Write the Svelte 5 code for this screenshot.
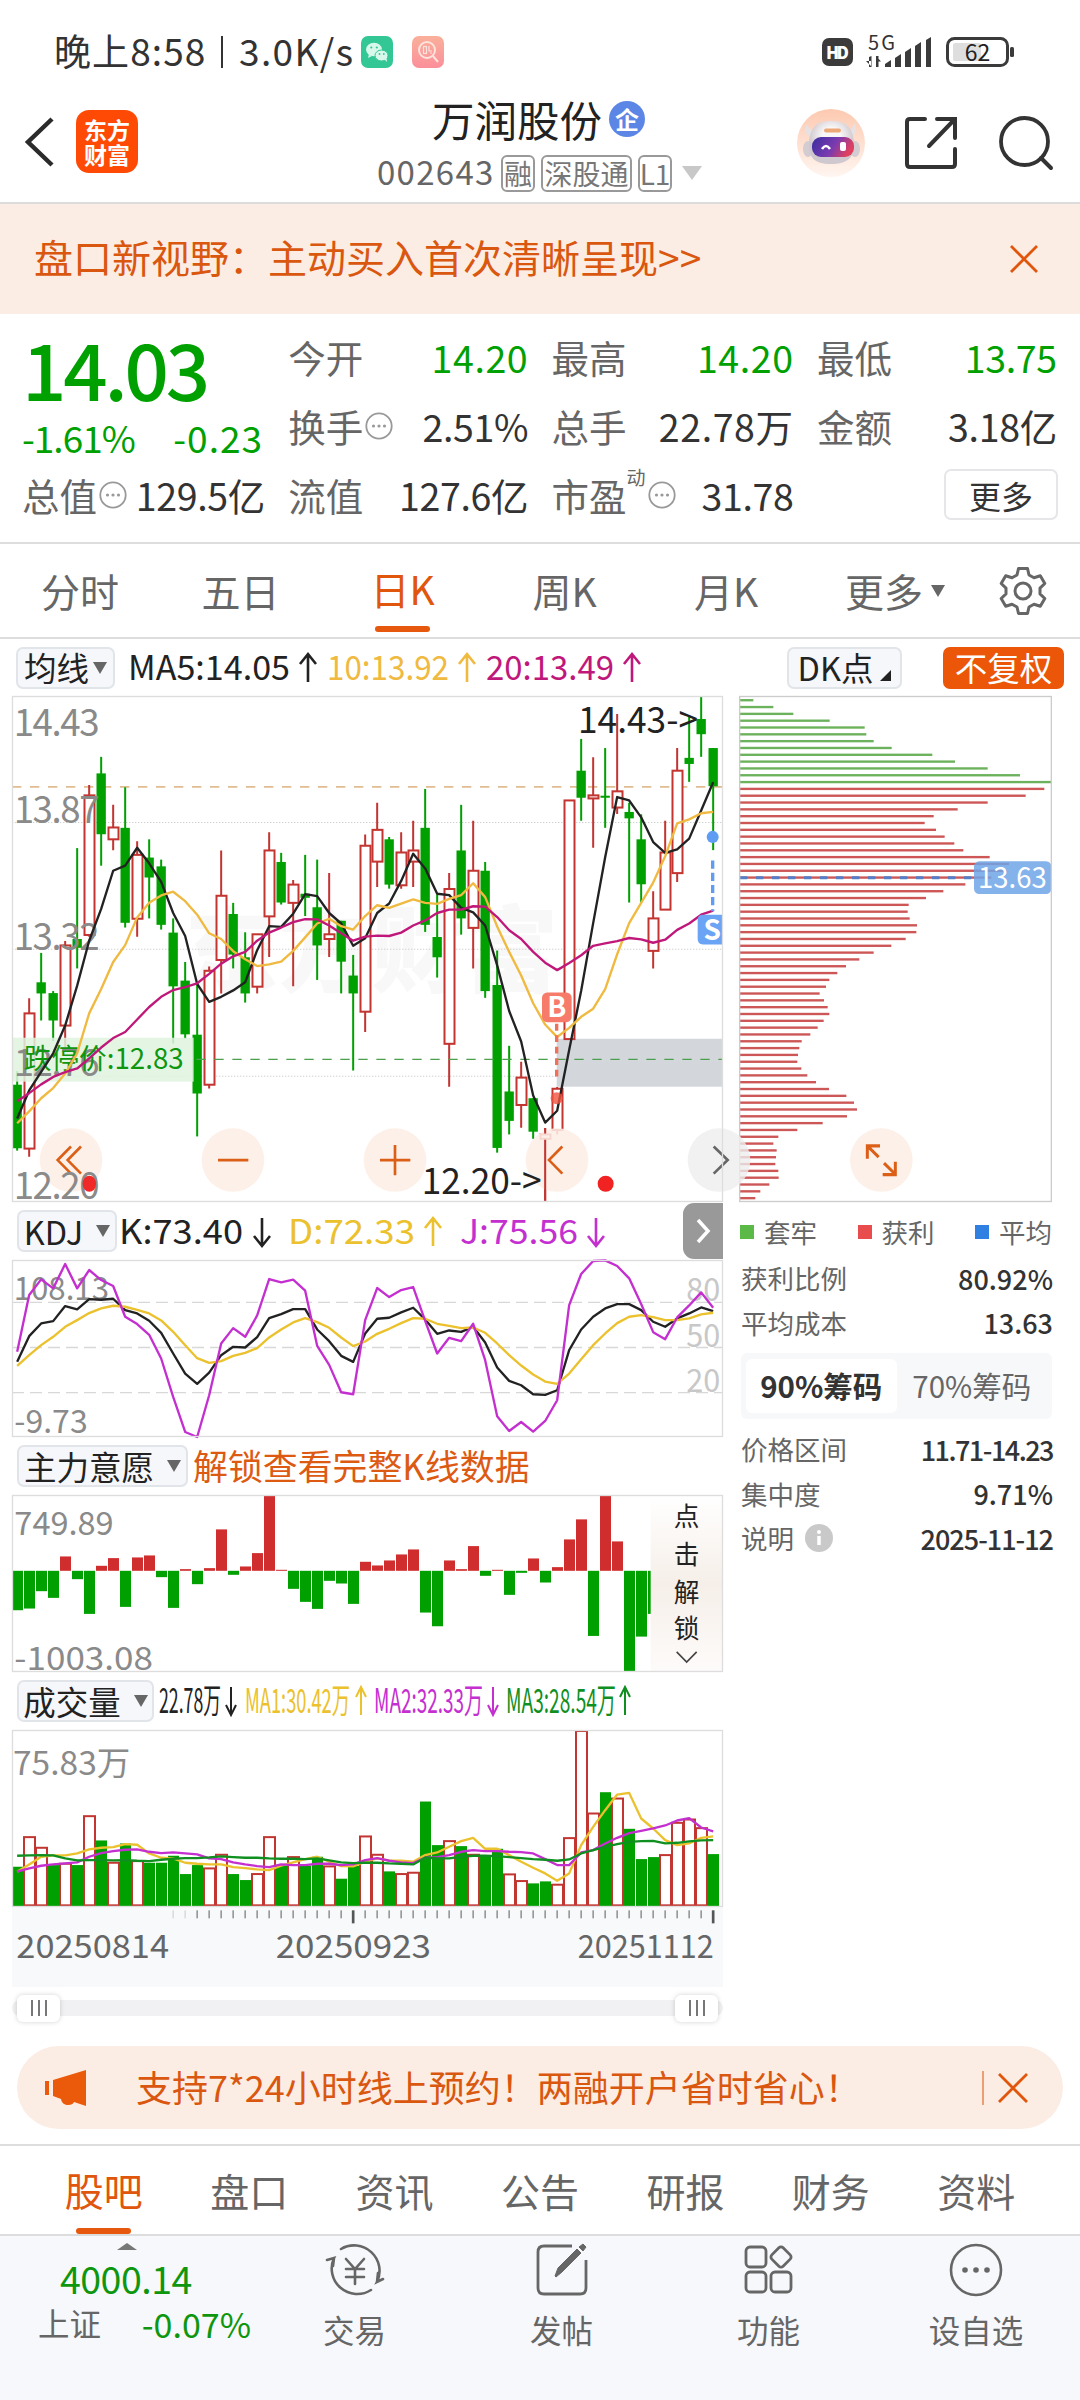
<script>
  const GREEN = '#00a000';
  const RED = '#c23531';

  // [high, top, bottom, low, up]
  const candles = [
    [1143, 1183, 1371, 1378, 0], [927, 972, 1372, 1396, 1], [793, 880, 913, 993, 0], [906, 912, 993, 1054, 0],
    [758, 771, 1008, 1080, 1], [483, 752, 778, 839, 0], [296, 327, 740, 745, 1], [213, 262, 442, 535, 0],
    [355, 422, 457, 489, 1], [303, 423, 704, 718, 0], [463, 503, 692, 745, 1], [457, 511, 570, 691, 0],
    [517, 537, 710, 724, 0], [691, 733, 892, 1061, 0], [820, 875, 1034, 1047, 0], [880, 1035, 1209, 1336, 0],
    [833, 846, 1183, 1194, 1], [490, 624, 814, 913, 1], [645, 678, 798, 839, 0], [732, 806, 913, 940, 0],
    [738, 738, 893, 913, 1], [436, 490, 685, 805, 1], [497, 524, 644, 650, 0], [577, 591, 645, 892, 1],
    [503, 618, 630, 684, 0], [517, 658, 771, 873, 0], [557, 738, 752, 805, 1], [698, 698, 819, 913, 0],
    [799, 860, 913, 1141, 0], [443, 476, 967, 1027, 1], [349, 429, 523, 598, 1], [450, 457, 591, 603, 0],
    [436, 496, 593, 603, 1], [402, 490, 523, 598, 1], [308, 423, 710, 731, 0], [620, 746, 806, 866, 0],
    [557, 604, 1062, 1189, 1], [355, 490, 691, 739, 0], [402, 550, 719, 839, 1], [524, 550, 906, 926, 0],
    [786, 888, 1370, 1384, 0], [1068, 1203, 1290, 1330, 0], [1115, 1162, 1243, 1310, 1], [1223, 1223, 1322, 1343, 0],
    [1311, 1330, 1343, 1530, 1], [1190, 1195, 1317, 1330, 1], [342, 342, 1048, 1048, 1], [160, 254, 334, 402, 0],
    [214, 327, 336, 482, 1], [187, 328, 334, 423, 0], [86, 315, 363, 382, 1], [349, 376, 395, 644, 0],
    [383, 457, 590, 644, 0], [611, 691, 787, 839, 1], [402, 496, 665, 665, 1], [187, 254, 557, 583, 1],
    [93, 216, 234, 287, 0], [33, 101, 146, 213, 0], [187, 187, 300, 489, 0]
  ];

  const ma5 = [1283, 1200, 1145, 1090, 1008, 890, 757, 663, 550, 535, 482, 528, 583, 675, 743, 885, 938, 923, 904, 880, 785, 714, 716, 677, 619, 625, 675, 706, 772, 750, 675, 647, 580, 500, 543, 618, 622, 660, 673, 712, 830, 965, 1055, 1215, 1295, 1260, 1080, 905, 705, 510, 332, 342, 392, 465, 497, 487, 455, 372, 288];
  const ma10 = [1297, 1262, 1223, 1193, 1150, 1090, 972, 900, 820, 770, 688, 645, 623, 612, 640, 680, 735, 752, 788, 812, 832, 827, 819, 787, 747, 706, 692, 714, 724, 684, 652, 660, 647, 635, 645, 648, 633, 622, 587, 628, 715, 790, 860, 942, 1005, 1042, 1015, 982, 958, 900, 797, 705, 645, 585, 507, 410, 398, 380, 376];
  const ma20 = [1232, 1208, 1182, 1160, 1146, 1135, 1105, 1073, 1045, 1027, 990, 953, 923, 903, 894, 883, 855, 825, 803, 790, 757, 733, 718, 702, 693, 694, 712, 735, 757, 745, 742, 743, 733, 712, 697, 675, 665, 665, 655, 656, 687, 726, 752, 790, 822, 844, 823, 800, 772, 765, 758, 749, 753, 763, 754, 725, 706, 680, 668];

  const kLine = [485, 408, 370, 363, 318, 328, 297, 299, 296, 330, 340, 362, 398, 460, 520, 551, 517, 465, 440, 442, 411, 354, 342, 327, 327, 388, 423, 467, 485, 400, 356, 353, 337, 323, 358, 401, 391, 395, 380, 427, 502, 542, 555, 582, 584, 570, 450, 388, 350, 325, 312, 312, 330, 365, 380, 355, 340, 322, 333];
  const dLine = [497, 465, 435, 410, 380, 360, 339, 325, 317, 320, 329, 340, 361, 395, 435, 474, 488, 483, 467, 458, 444, 412, 388, 367, 354, 366, 383, 412, 438, 424, 401, 386, 369, 354, 356, 371, 377, 384, 382, 398, 430, 465, 496, 523, 544, 551, 520, 477, 435, 400, 369, 350, 345, 351, 360, 360, 355, 343, 338];
  const jLine = [455, 285, 238, 265, 192, 265, 210, 240, 258, 350, 372, 404, 475, 590, 695, 710, 585, 430, 384, 410, 346, 237, 247, 239, 272, 437, 494, 576, 582, 360, 264, 291, 270, 261, 362, 460, 413, 423, 371, 480, 648, 692, 665, 694, 662, 600, 315, 222, 183, 181, 198, 235, 312, 396, 417, 352, 316, 277, 323];

  // above the zero line (407) is inflow, below is outflow
  const force = [525, 520, 468, 488, 364, 432, 536, 392, 369, 515, 367, 361, 426, 518, 402, 447, 399, 283, 419, 394, 354, 181, 404, 461, 500, 521, 437, 445, 506, 380, 391, 376, 358, 343, 532, 573, 376, 402, 333, 422, 404, 479, 413, 370, 442, 396, 313, 253, 602, 183, 319, 710, 604, 536];

  const volume = [
    [575, 0], [486, 1], [518, 1], [570, 0], [566, 1], [570, 0], [423, 1], [496, 0], [563, 1], [505, 0],
    [558, 1], [563, 0], [563, 0], [542, 0], [597, 0], [570, 0], [580, 1], [539, 1], [597, 0], [615, 0],
    [597, 1], [486, 1], [572, 0], [546, 1], [572, 0], [545, 0], [574, 1], [611, 0], [572, 0], [484, 1],
    [539, 1], [589, 0], [597, 1], [593, 1], [379, 0], [510, 0], [498, 1], [513, 0], [539, 1], [541, 0],
    [521, 0], [598, 1], [618, 1], [625, 0], [619, 0], [629, 1], [489, 1], [167, 1], [415, 1], [351, 0],
    [370, 1], [461, 0], [552, 0], [546, 0], [540, 1], [443, 1], [433, 1], [459, 1], [537, 0]
  ];
  const vol1 = [590, 568, 545, 541, 541, 535, 523, 518, 516, 507, 509, 535, 548, 550, 563, 566, 568, 568, 576, 579, 583, 585, 572, 562, 552, 545, 560, 573, 574, 560, 550, 556, 557, 560, 540, 532, 515, 498, 488, 521, 521, 540, 560, 578, 595, 617, 595, 510, 455, 405, 358, 353, 430, 460, 495, 510, 505, 488, 484];
  const vol2 = [590, 580, 572, 568, 565, 562, 545, 534, 528, 524, 523, 530, 534, 532, 535, 538, 550, 552, 562, 568, 573, 576, 568, 570, 570, 566, 566, 570, 568, 555, 549, 557, 562, 564, 548, 546, 540, 530, 525, 528, 528, 530, 531, 535, 552, 570, 570, 532, 525, 505, 488, 474, 467, 460, 451, 436, 429, 457, 469];
  const vol3 = [542, 541, 540, 541, 550, 556, 555, 555, 556, 555, 557, 558, 554, 551, 549, 549, 547, 544, 546, 548, 548, 550, 551, 551, 552, 550, 556, 562, 564, 563, 563, 565, 566, 568, 548, 550, 550, 545, 542, 542, 543, 546, 549, 552, 554, 557, 553, 535, 525, 515, 507, 500, 498, 497, 505, 503, 499, 496, 495];

  const chips = [
    86, 146, 206, 315, 420, 425, 447, 501, 623, 691, 789, 886, 980, 959, 903, 789, 699, 627, 600, 634, 660, 689,
    716, 795, 853, 846, 800, 722, 656, 604, 552, 549, 555, 577, 575, 543, 500, 447, 404, 364, 338, 314, 304, 285,
    298, 309, 314, 297, 279, 257, 231, 224, 220, 218, 230, 248, 274, 313, 365, 388, 397, 367, 294, 218, 161, 146,
    156, 154, 152, 161, 162, 134, 107, 92
  ];

  const maLegend = [
    { x: 128, w: 162, text: 'MA5:14.05', color: '#222', up: true, ax: 308 },
    { x: 327, w: 122, text: '10:13.92', color: '#f0b940', up: true, ax: 467 },
    { x: 486, w: 128, text: '20:13.49', color: '#c0187a', up: true, ax: 632 }
  ];
  const kdjLegend = [
    { x: 119, w: 124, text: 'K:73.40', color: '#222', up: false, ax: 262 },
    { x: 288, w: 127, text: 'D:72.33', color: '#ebc12d', up: true, ax: 433 },
    { x: 460, w: 118, text: 'J:75.56', color: '#c42fd0', up: false, ax: 596 }
  ];
  const volLegend = [
    { x: 159, w: 62, text: '22.78万', color: '#222', up: false, ax: 231, thin: true },
    { x: 245, w: 105, text: 'MA1:30.42万', color: '#ebc12d', up: true, ax: 361, thin: true },
    { x: 374, w: 109, text: 'MA2:32.33万', color: '#c42fd0', up: false, ax: 493, thin: true },
    { x: 506, w: 110, text: 'MA3:28.54万', color: '#0f8f1f', up: true, ax: 625, thin: true }
  ];

  const periods = ['分时', '五日', '日K', '周K', '月K'];
  let period = $state('日K');

  const sections = ['股吧', '盘口', '资讯', '公告', '研报', '财务', '资料'];
  let section = $state('股吧');

  const prices = [[150, '14.43'], [408, '13.87'], [784, '13.32'], [1157, '12.76']];
  const ticks = Array.from({ length: 46 }, (_, n) => n + 13);

  const cx = (i) => 52.5 + i * 36;
  const line = (values) => values.map((y, i) => `${cx(i)},${y}`).join(' ');
</script>

{#snippet legend(items, y)}
  <svg class="legend" width="711" height="58" viewBox="12 0 711 58">
    {#each items as item}
      <text x={item.x} y={y + 12} font-size="34" fill={item.color} textLength={item.w} lengthAdjust="spacingAndGlyphs">{item.text}</text>
      <path
        d={item.up
          ? `M${item.ax} ${y + 14}V${y - 14}M${item.ax - (item.thin ? 5 : 8)} ${y - 4}L${item.ax} ${y - 14}L${item.ax + (item.thin ? 5 : 8)} ${y - 4}`
          : `M${item.ax} ${y - 14}V${y + 14}M${item.ax - (item.thin ? 5 : 8)} ${y + 4}L${item.ax} ${y + 14}L${item.ax + (item.thin ? 5 : 8)} ${y + 4}`}
        fill="none" stroke={item.color} stroke-width={item.thin ? 2 : 2.6} />
    {/each}
  </svg>
{/snippet}

{#snippet dots()}
  <svg class="dots" width="28" height="28" viewBox="0 0 28 28">
    <circle cx="14" cy="14" r="12.7" fill="none" stroke="#999" stroke-width="1.8" />
    <circle cx="8.5" cy="14" r="1.6" fill="#999" /><circle cx="14" cy="14" r="1.6" fill="#999" /><circle cx="19.5" cy="14" r="1.6" fill="#999" />
  </svg>
{/snippet}

<main class="app">
  <div class="status">
    <span class="clock">晚上8:58</span><span class="bar"></span><span class="clock speed">3.0K/s</span>
    <svg class="chat" width="32" height="32" viewBox="0 0 32 32">
      <rect width="32" height="32" rx="7" fill="#34c796" />
      <ellipse cx="13" cy="13.5" rx="8" ry="6.8" fill="#d9f8ec" /><path d="M8 18l-1 4 4-2z" fill="#d9f8ec" />
      <ellipse cx="20.5" cy="19.5" rx="6.5" ry="5.5" fill="#d9f8ec" stroke="#34c796" stroke-width="1" /><path d="M23 23l3 3-.5-4z" fill="#d9f8ec" />
      <g fill="#34c796"><circle cx="10.3" cy="11.5" r="1.1" /><circle cx="15.8" cy="11.5" r="1.1" /><circle cx="18.5" cy="18" r=".9" /><circle cx="22.8" cy="18" r=".9" /></g>
    </svg>
    <svg class="find" width="32" height="32" viewBox="0 0 32 32">
      <defs><linearGradient id="find" x2="0" y2="1"><stop stop-color="#f9b09a" /><stop offset="1" stop-color="#fb8f9b" /></linearGradient></defs>
      <rect width="32" height="32" rx="7" fill="url(#find)" />
      <circle cx="15" cy="14" r="8" fill="none" stroke="#fde3dc" stroke-width="2" /><path d="M21 20l5 6" stroke="#fde3dc" stroke-width="2" />
      <rect x="11.5" y="10.5" width="3" height="7" fill="none" stroke="#fde3dc" stroke-width="1.2" /><path d="M17 10v5h3M18 17h2" stroke="#fde3dc" stroke-width="1.2" fill="none" />
    </svg>
    <svg class="signal" width="200" height="40" viewBox="815 32 200 40">
      <rect x="822" y="38" width="31" height="28" rx="7" fill="#3b3b3b" />
      <text x="837.5" y="59" font-size="17" font-weight="900" fill="#fff" text-anchor="middle" textLength="23">HD</text>
      <text x="868" y="50" font-size="20" fill="#333" textLength="27">5G</text>
      <g fill="#3b3b3b">
        <path d="M869 57v10h2.500V56zM866 61h5v5zM876 67V56h2.500v11zM876 56l5 5.500h-5z" />
        <path d="M885 67v-3l6-4v7zM895 67V58l6-4v13zM905 67V52l6-4v19zM915 67V46l6-4v25zM926 67V40l5-3v30z" />
        <rect x="1010" y="47" width="4" height="10" rx="1.500" />
      </g>
      <rect x="947.500" y="38.500" width="60" height="27" rx="7" fill="#fff" stroke="#3b3b3b" stroke-width="3" />
      <rect x="953" y="43" width="28" height="18" rx="2" fill="#dedede" />
      <text x="977.500" y="60.500" font-size="23" fill="#222" text-anchor="middle">62</text>
    </svg>
  </div>

  <header class="nav">
    <div class="left">
      <svg width="32" height="52" viewBox="0 0 32 52"><path d="M30 3L6 26l24 23" fill="none" stroke="#2b2b2b" stroke-width="4.500" /></svg>
      <div class="logo"><span>东方</span><span>财富</span></div>
    </div>
    <div class="stock">
      <h1>万润股份<i>企</i></h1>
      <p><span class="code">002643</span><b>融</b><b>深股通</b><b>L1</b><svg width="20" height="14" viewBox="0 0 20 14"><path d="M0 0h20L10 14z" fill="#c8c8c8" /></svg></p>
    </div>
    <div class="tools">
      <svg width="68" height="68" viewBox="0 0 68 68">
        <defs>
          <linearGradient id="halo" x2="0" y2="1"><stop stop-color="#fdc9b0" /><stop offset="1" stop-color="#fff6f1" /></linearGradient>
          <linearGradient id="visor" x2="1" y2=".3"><stop stop-color="#3b2f9f" /><stop offset=".6" stop-color="#7a3bb0" /><stop offset="1" stop-color="#e0405f" /></linearGradient>
          <radialGradient id="helmet" cy=".35"><stop offset=".4" stop-color="#f8f6f7" /><stop offset="1" stop-color="#cfc8ce" /></radialGradient>
        </defs>
        <circle cx="34" cy="34" r="34" fill="url(#halo)" />
        <path d="M10 15q-5 9 5 14l5-6q-8-1-10-8zM57 14q6 9-4 15l-5-6q8-1 9-9z" fill="#e6e1e3" />
        <ellipse cx="11" cy="40" rx="5" ry="8" fill="#d3cdd2" /><ellipse cx="58" cy="40" rx="5" ry="8" fill="#d3cdd2" />
        <path d="M34 12c16 0 22 7 23 22 1 14-6 21-23 21S11 48 12 34c1-15 7-22 22-22z" fill="url(#helmet)" />
        <rect x="15" y="28" width="42" height="20" rx="9" fill="url(#visor)" />
        <rect x="27" y="19.500" width="17" height="4" rx="2" fill="#eda878" />
        <path d="M25 40q4-6 8 0" fill="none" stroke="#fff" stroke-width="2.500" /><rect x="43" y="33" width="6" height="9" rx="2" fill="#fff" />
      </svg>
      <svg width="54" height="54" viewBox="0 0 54 54">
        <path d="M21 3H6Q3 3 3 6v42q0 3 3 3h42q3 0 3-3V33M33 3h18v19M51 3L25 30" fill="none" stroke="#333" stroke-width="4" stroke-linecap="round" />
      </svg>
      <svg width="54" height="54" viewBox="0 0 54 54">
        <circle cx="25.500" cy="25.500" r="23.500" fill="none" stroke="#333" stroke-width="3.800" /><path d="M42 42l10 10" stroke="#333" stroke-width="4" stroke-linecap="round" />
      </svg>
    </div>
  </header>

  <div class="notice">
    <span>盘口新视野：主动买入首次清晰呈现&gt;&gt;</span>
    <svg width="30" height="30" viewBox="0 0 30 30"><path d="M2 2l26 26M28 2L2 28" stroke="#e0560c" stroke-width="2.800" /></svg>
  </div>

  <section class="quote">
    <div class="price">
      <strong>14.03</strong>
      <div class="change"><span>-1.61%</span><span>-0.23</span></div>
    </div>
    <div class="cell"><label>今开</label><em class="down wide">14.20</em></div>
    <div class="cell"><label>最高</label><em class="down wide">14.20</em></div>
    <div class="cell"><label>最低</label><em class="down">13.75</em></div>
    <div class="cell"><label>换手{@render dots()}</label><em>2.51%</em></div>
    <div class="cell"><label>总手</label><em class="wide">22.78万</em></div>
    <div class="cell"><label>金额</label><em>3.18亿</em></div>
    <div class="cell"><label>总值{@render dots()}</label><em>129.5亿</em></div>
    <div class="cell"><label>流值</label><em>127.6亿</em></div>
    <div class="cell"><label>市盈<sup>动</sup>{@render dots()}</label><em>31.78</em></div>
    <div class="cell end"><button class="more">更多</button></div>
  </section>

  <nav class="periods">
    {#each periods as name}
      <button class:active={period === name} onclick={() => (period = name)}>{name}</button>
    {/each}
    <button>更多<svg width="14" height="12" viewBox="0 0 14 12"><path d="M0 0h14L7 12z" fill="#666" /></svg></button>
    <button>
      <svg width="50" height="50" viewBox="0 0 50 50">
        <path d="M20.500 2.500h9l1.500 6.500 5 2.800 6.300-2 4.500 7.700-4.800 4.600v5.800l4.800 4.600-4.500 7.700-6.300-2-5 2.800-1.500 6.500h-9L19 41l-5-2.800-6.300 2-4.500-7.700L8 27.900v-5.800l-4.800-4.600 4.500-7.700 6.300 2L19 9z" fill="none" stroke="#666" stroke-width="3" stroke-linejoin="round" />
        <circle cx="25" cy="25" r="8" fill="none" stroke="#666" stroke-width="3" />
      </svg>
    </button>
  </nav>

  <div class="averages">
    <button class="pick tight">均线<svg width="14" height="12" viewBox="0 0 14 12"><path d="M0 0h14L7 12z" fill="#666" /></svg></button>
    {@render legend(maLegend, 29)}
    <button class="pick dk">DK点<svg width="11" height="11" viewBox="0 0 11 11"><path d="M11 0v11H0z" fill="#222" /></svg></button>
    <button class="rights">不复权</button>
  </div>

  <div class="board">
    <div class="charts">
      <svg class="kline" width="711" height="506" viewBox="37 33 2133 1497" preserveAspectRatio="none">
        <text x="555" y="888" font-size="280" font-weight="900" fill="#f8f8f8" textLength="1120">东方财富</text>
        <g stroke="#d0d0d0" stroke-width="3" stroke-dasharray="4 5">
          <path d="M37 407H2170M37 782H2170M37 1158H2170" />
        </g>
        <rect x="1671" y="1047" width="499" height="142" fill="#d3d7dc" />
        <path d="M37 302H2170" stroke="#e0bd90" stroke-width="5" stroke-dasharray="28 26" />
        {#each candles as [high, top, bottom, low, up], i}
          {#if up}
            <path d="M{cx(i)} {high}V{top}M{cx(i)} {bottom}V{low}" stroke={RED} stroke-width="6" />
            <rect x={cx(i) - 14} y={top} width="30" height={Math.max(bottom - top, 4)} fill="#fff" stroke={RED} stroke-width="6" />
          {:else}
            <path d="M{cx(i)} {high}V{low}" stroke={GREEN} stroke-width="6" />
            <rect x={cx(i) - 14} y={top} width="28" height={bottom - top} fill={GREEN} />
          {/if}
        {/each}
        <rect x="37" y="1044" width="545" height="130" fill="#dff3df" fill-opacity=".85" />
        {#each prices as [y, label]}
          <text x="42" {y} font-size="110" fill="#8a8a8a" textLength="258">{label}</text>
        {/each}
        <path d="M590 1108H2170" stroke="#4c9f4c" stroke-width="4" stroke-dasharray="28 26" />
        <text x="72" y="1138" font-size="84" fill="#0f960f" textLength="480" lengthAdjust="spacingAndGlyphs">跌停价:12.83</text>
        <g fill="none" stroke-width="7" stroke-linejoin="round">
          <polyline points={line(ma5)} stroke="#222" />
          <polyline points={line(ma10)} stroke="#f0b940" />
          <polyline points={line(ma20)} stroke="#c0187a" />
        </g>

        <path d="M1671 1003V1160" stroke="#f0705c" stroke-width="10" stroke-dasharray="20 14" />
        <circle cx="1671" cy="1223" r="18" fill="#f0533f" opacity=".8" />
        <rect x="1627" y="910" width="89" height="88" rx="16" fill="#f77b6b" />
        <text x="1671" y="983" font-size="84" font-weight="700" fill="#fff" text-anchor="middle">B</text>
        <path d="M2139 520V670" stroke="#5f9df5" stroke-width="10" stroke-dasharray="24 12" />
        <circle cx="2139" cy="450" r="18" fill="#5f9df5" />
        <path d="M2170 680h-60q-16 0-16 16v56q0 16 16 16h60z" fill="#6ba3f5" />
        <text x="2138" y="754" font-size="84" font-weight="700" fill="#fff" text-anchor="middle">S</text>

        <g fill="#fdeee5" fill-opacity=".88">
          <circle cx="214" cy="1406" r="94" /><circle cx="700" cy="1406" r="94" />
          <circle cx="1186" cy="1406" r="94" /><circle cx="1672" cy="1406" r="94" />
        </g>
        <circle cx="2158" cy="1406" r="94" fill="#eee" fill-opacity=".8" />
        <path d="M{cx(44)} 1346V1530M{cx(44)} 1311v16" stroke={RED} stroke-width="6" />
        <g fill="none" stroke="#dc5f18" stroke-width="8">
          <path d="M214 1366l-40 40 40 40M244 1366l-40 40 40 40M1688 1366l-40 40 40 40" />
          <path d="M655 1406h91M1141 1406h91M1186 1361v90" />
        </g>
        <path d="M2142 1366l42 40-42 40" fill="none" stroke="#666" stroke-width="8" />
        <text x="42" y="1522" font-size="110" fill="#8a8a8a" textLength="258">12.20</text>
        <ellipse cx="269" cy="1476" rx="20" ry="24" fill="#f02828" />
        <circle cx="1818" cy="1476" r="24" fill="#f02222" />
        <text x="1735" y="142" font-size="108" fill="#222" textLength="360" lengthAdjust="spacingAndGlyphs">14.43-&gt;</text>
        <text x="1266" y="1505" font-size="108" fill="#222" textLength="360" lengthAdjust="spacingAndGlyphs">12.20-&gt;</text>
        <rect x="38.500" y="34.500" width="2130" height="1494" fill="none" stroke="#ddd" stroke-width="4" />
      </svg>

      <div class="row">
        <button class="pick w100">KDJ<svg width="14" height="12" viewBox="0 0 14 12"><path d="M0 0h14L7 12z" fill="#666" /></svg></button>
        {@render legend(kdjLegend, 30)}
        <button class="next" aria-label="next"><svg width="16" height="26" viewBox="0 0 16 26"><path d="M3 2l10 11L3 24" fill="none" stroke="#fff" stroke-width="3.500" /></svg></button>
      </div>
      <svg width="711" height="177" viewBox="37 180 2133 530" preserveAspectRatio="none">
        <path d="M37 307H2170M37 442H2170M37 577H2170" stroke="#d8d8d8" stroke-width="4" stroke-dasharray="36 18" />
        <g font-size="94" fill="#c8c8c8">
          <text x="2060" y="304" textLength="102" lengthAdjust="spacingAndGlyphs">80</text>
          <text x="2060" y="440" textLength="102" lengthAdjust="spacingAndGlyphs">50</text>
          <text x="2060" y="574" textLength="102" lengthAdjust="spacingAndGlyphs">20</text>
        </g>
        <g font-size="98" fill="#8a8a8a">
          <text x="42" y="299" textLength="286" lengthAdjust="spacingAndGlyphs">108.13</text>
          <text x="44" y="698" textLength="220" lengthAdjust="spacingAndGlyphs">-9.73</text>
        </g>
        <g fill="none" stroke-width="7" stroke-linejoin="round">
          <polyline points={line(kLine)} stroke="#222" />
          <polyline points={line(dLine)} stroke="#ebc12d" />
          <polyline points={line(jLine)} stroke="#c42fd0" />
        </g>
        <rect x="38.500" y="181.500" width="2130" height="527" fill="none" stroke="#ddd" stroke-width="4" />
      </svg>

      <div class="row">
        <button class="pick w171">主力意愿<svg width="14" height="12" viewBox="0 0 14 12"><path d="M0 0h14L7 12z" fill="#666" /></svg></button>
        <span class="unlock">解锁查看完整K线数据</span>
      </div>
      <svg width="711" height="177" viewBox="37 180 2133 530" preserveAspectRatio="none">
        <defs><linearGradient id="veil" x2="0" y2="1"><stop stop-color="#fff" /><stop offset=".5" stop-color="#f6efe9" /><stop offset="1" stop-color="#fdfbfa" /></linearGradient></defs>
        {#each force as y, i}
          <rect x={37 + i * 36} y={Math.min(y, 407)} width="33" height={Math.abs(y - 407)} fill={y < 407 ? '#d02e2e' : GREEN} />
        {/each}
        <g font-size="98" fill="#8a8a8a">
          <text x="44" y="299" textLength="298" lengthAdjust="spacingAndGlyphs">749.89</text>
          <text x="44" y="705" textLength="416" lengthAdjust="spacingAndGlyphs">-1003.08</text>
        </g>
        <rect x="1953" y="182" width="215" height="526" fill="url(#veil)" />
        <g font-size="77" fill="#222" text-anchor="middle">
          <text x="2061" y="273">点</text><text x="2061" y="386">击</text><text x="2061" y="499">解</text><text x="2061" y="609">锁</text>
        </g>
        <path d="M2031 650l30 30 30-30" fill="none" stroke="#444" stroke-width="5" />
        <rect x="38.500" y="181.500" width="2130" height="527" fill="none" stroke="#ddd" stroke-width="4" />
      </svg>

      <div class="row">
        <button class="pick w137">成交量<svg width="14" height="12" viewBox="0 0 14 12"><path d="M0 0h14L7 12z" fill="#666" /></svg></button>
        {@render legend(volLegend, 29)}
      </div>
      <svg width="711" height="177" viewBox="37 164 2133 532" preserveAspectRatio="none">
        <text x="40" y="300" font-size="98" fill="#8a8a8a" textLength="352" lengthAdjust="spacingAndGlyphs">75.83万</text>
        {#each volume as [y, up], i}
          {#if up}
            <rect x={37 + i * 36} y={y} width="33" height={691 - y} fill="#fff" stroke={RED} stroke-width="6" />
          {:else}
            <rect x={37 + i * 36} y={y} width="33" height={694 - y} fill={GREEN} />
          {/if}
        {/each}
        <g fill="none" stroke-width="7" stroke-linejoin="round">
          <polyline points={line(vol1)} stroke="#ebc12d" />
          <polyline points={line(vol2)} stroke="#c42fd0" />
          <polyline points={line(vol3)} stroke="#0f8f1f" />
        </g>
        <rect x="38.500" y="165.500" width="2130" height="529" fill="none" stroke="#ddd" stroke-width="4" />
      </svg>
      <svg class="axis" width="711" height="80" viewBox="37 696 2133 240">
        {#each ticks as i}
          <path d="M{cx(i)} 706V{i === 28 || i === 58 ? 745 : 730}" stroke={i < 15 ? '#ddd' : i === 28 || i === 58 ? '#555' : '#999'} stroke-width={i === 28 || i === 58 ? 8 : 5} />
        {/each}
        <g font-size="98" fill="#666">
          <text x="50" y="848" textLength="458" lengthAdjust="spacingAndGlyphs">20250814</text>
          <text x="828" y="848" textLength="466" lengthAdjust="spacingAndGlyphs">20250923</text>
          <text x="1734" y="848" textLength="408" lengthAdjust="spacingAndGlyphs">20251112</text>
        </g>
      </svg>
      <div class="slider">
        <span class="handle"><i></i><i></i><i></i></span>
        <span class="handle"><i></i><i></i><i></i></span>
      </div>
    </div>

    <aside class="chips">
      <svg width="313" height="506" viewBox="43 33 939 1497" preserveAspectRatio="none">
        {#each chips as end, i}
          <rect x="46" y={42 + i * 20.18} width={end - 46} height="7" fill={i < 13 ? '#6cb25c' : '#cd5656'} />
        {/each}
        <path d="M46 571H750" stroke="#5580c8" stroke-width="9" stroke-dasharray="22 26" />
        <rect x="748" y="522" width="232" height="97" rx="16" fill="#6ea5e8" fill-opacity=".85" />
        <text x="760" y="601" font-size="86" fill="#fff" textLength="206" lengthAdjust="spacingAndGlyphs">13.63</text>
        <circle cx="470" cy="1406" r="94" fill="#fdf0e9" />
        <path d="M462 1397l-34-33M428 1402v-38h38M478 1415l34 33M512 1411v38h-38" fill="none" stroke="#dc5f18" stroke-width="9" />
        <rect x="45" y="34.500" width="935" height="1494" fill="none" stroke="#ccc" stroke-width="4" />
      </svg>
      <div class="keys">
        <span><i class="trapped"></i>套牢</span><span><i class="profit"></i>获利</span><span><i class="mean"></i>平均</span>
      </div>
      <div class="stat"><span>获利比例</span><b>80.92%</b></div>
      <div class="stat"><span>平均成本</span><b>13.63</b></div>
      <div class="switch"><button class="on">90%筹码</button><button>70%筹码</button></div>
      <div class="stat"><span>价格区间</span><b class="narrow">11.71-14.23</b></div>
      <div class="stat"><span>集中度</span><b>9.71%</b></div>
      <div class="stat">
        <span>说明<svg width="28" height="28" viewBox="0 0 28 28"><circle cx="14" cy="14" r="14" fill="#c9c9c9" /><circle cx="14" cy="8" r="2" fill="#fff" /><path d="M14 12v9" stroke="#fff" stroke-width="3.500" /></svg></span>
        <b class="date">2025-11-12</b>
      </div>
    </aside>
  </div>

  <div class="promo">
    <svg width="42" height="38" viewBox="0 0 42 38"><path d="M0 12h4v14H0zM8 11L41 1v36l-12-4c-1 4-12 5-13-3l-8-3z" fill="#eb5a0a" /></svg>
    <span>支持7*24小时线上预约！两融开户省时省心！</span>
    <svg class="close" width="47" height="34" viewBox="0 0 47 34"><path d="M1 0v34" stroke="#e8824c" stroke-width="1.500" /><path d="M17 3l28 28M45 3L17 31" stroke="#e0560c" stroke-width="2.800" /></svg>
  </div>

  <nav class="sections">
    {#each sections as name}
      <button class:active={section === name} onclick={() => (section = name)}>{name}</button>
    {/each}
  </nav>

  <footer class="bottom">
    <div class="index">
      <svg width="20" height="7" viewBox="0 0 20 7"><path d="M10 0l10 7H0z" fill="#777" /></svg>
      <strong>4000.14</strong>
      <p><span>上证</span><em>-0.07%</em></p>
    </div>
    <div class="item">
      <svg width="60" height="54" viewBox="0 0 60 54">
        <g fill="none" stroke="#666" stroke-width="2.600" stroke-linecap="round">
          <path d="M16 6A25.500 25.500 0 0 1 52 39l6-3M52 39l1-9M46 47A25.500 25.500 0 0 1 9 15l-7 2M9 15l-1 8" />
          <path d="M21 16l9 10 9-10M30 26v15M21 26h18M21 34h18" />
        </g>
      </svg>
      <span>交易</span>
    </div>
    <div class="item">
      <svg width="54" height="54" viewBox="0 0 54 54">
        <path d="M37 3H9Q3 3 3 9v36q0 6 6 6h36q6 0 6-6V17" fill="none" stroke="#666" stroke-width="2.800" />
        <path d="M21 34l-1-1 3-8L42 6l4 4-19 19zM44 4l4-3 3 3-3 4z" fill="#666" stroke="#666" stroke-width="1" />
      </svg>
      <span>发帖</span>
    </div>
    <div class="item">
      <svg width="54" height="54" viewBox="0 0 54 54">
        <g fill="none" stroke="#666" stroke-width="2.800"><rect x="4" y="4" width="20" height="20" rx="4" /><rect x="4" y="29" width="20" height="20" rx="4" /><rect x="29" y="29" width="20" height="20" rx="4" /><rect x="31" y="6" width="16" height="16" rx="3" transform="rotate(45 39 14)" /></g>
      </svg>
      <span>功能</span>
    </div>
    <div class="item">
      <svg width="54" height="54" viewBox="0 0 54 54">
        <circle cx="27" cy="27" r="25" fill="none" stroke="#666" stroke-width="2.600" />
        <g fill="#666"><circle cx="16" cy="27" r="2.800" /><circle cx="27" cy="27" r="2.800" /><circle cx="38" cy="27" r="2.800" /></g>
      </svg>
      <span>设自选</span>
    </div>
  </footer>
</main>

<style>
  :global(body) { margin: 0; background: #fff; }
  .app { width: 1080px; height: 2400px; overflow: hidden; background: #fff; color: #333; font-family: "Noto Sans CJK SC", "Noto Sans", sans-serif; line-height: 1; }
  button { display: flex; align-items: center; justify-content: center; margin: 0; padding: 0; border: 0; background: none; color: inherit; font: inherit; white-space: nowrap; }
  svg { display: block; flex: none; overflow: visible; }
  span, em, b, strong, label { white-space: nowrap; }
  em, i { font-style: normal; }
  p, h1 { margin: 0; }

  .status { display: flex; align-items: center; height: 96px; padding: 8px 65px 0 54px; box-sizing: border-box; color: #333; }
  .clock { font-size: 37px; letter-spacing: 1.100px; margin-top: -4px; }
  .speed { letter-spacing: 1.400px; }
  .bar { width: 2.500px; height: 32px; margin: 0 16px 0 14px; background: #333; }
  .chat { margin-left: 7px; }
  .find { margin-left: 19px; }
  .signal { margin-left: auto; }

  .nav { display: grid; grid-template-columns: 377px 326px 1fr; height: 106px; border-bottom: 2px solid #dcdcdc; }
  .left { display: flex; align-items: center; gap: 22px; padding: 0 0 15px 22px; }
  .logo { display: flex; flex-direction: column; align-items: center; justify-content: center; gap: 2px; width: 62px; height: 63px; border-radius: 13px; background: #ff4a05; color: #fff; font-size: 23px; font-weight: 700; }
  .stock h1 { display: flex; align-items: center; justify-content: center; height: 46px; padding: 0 3px 0 0; font-size: 42.500px; font-weight: 400; color: #222; }
  .stock i { display: flex; align-items: center; justify-content: center; width: 36px; height: 36px; margin-left: 7px; border-radius: 50%; background: #5b86e5; color: #fff; font-size: 24px; font-weight: 700; }
  .stock p { display: flex; align-items: center; height: 38px; margin-top: 12px; color: #666; font-size: 33px; }
  .code { width: 124px; margin-top: -3px; letter-spacing: 1.300px; }
  .stock b { display: flex; flex: none; align-items: center; justify-content: center; height: 37px; margin-right: 6px; padding: 0 2px; border: 2px solid #999; border-radius: 6px; box-sizing: border-box; font-size: 28px; font-weight: 400; color: #777; }
  .stock b:nth-of-type(1) { width: 34px; }
  .stock b:nth-of-type(2) { width: 91px; }
  .stock b:nth-of-type(3) { width: 34px; }
  .stock p svg { margin-left: 4px; }
  .tools { display: flex; align-items: center; padding: 0 0 13px 94px; gap: 39px; }
  .tools svg:nth-child(2) { margin-right: 2px; }

  .notice { display: flex; align-items: center; justify-content: space-between; height: 110px; padding: 0 41px 0 34px; background: #fcede4; color: #d9570f; font-size: 39px; }
  .notice span { margin-top: -5px; }

  .quote { display: grid; grid-template-columns: 241px 238px 240px 238px; grid-template-rows: repeat(3, 69px); column-gap: 25.300px; height: 230px; padding: 8px 25px 0 22px; box-sizing: border-box; border-bottom: 2px solid #ddd; }
  .price { grid-row: span 2; color: #00a000; }
  .price strong { display: block; height: 92px; padding-top: 6px; box-sizing: border-box; font-size: 78px; font-weight: 500; letter-spacing: -3.200px; }
  .change { display: flex; justify-content: space-between; padding-top: 5px; font-size: 37px; letter-spacing: -1px; }
  .change span:last-child { letter-spacing: 1px; }
  .cell { display: flex; align-items: center; justify-content: space-between; font-size: 37.500px; }
  .cell label { display: flex; align-items: center; color: #666; }
  .cell em { margin-right: -2px; letter-spacing: -0.300px; }
  .cell em.down { color: #00a000; }
  .cell em.wide { letter-spacing: 0.600px; }
  .cell sup { align-self: flex-start; margin-top: -9px; font-size: 19px; line-height: 1; }
  .dots { margin: 0 0 0 2px; }
  .cell.end { justify-content: flex-end; }
  .more { width: 114px; height: 51px; margin-right: -3px; border: 2px solid #e6e6e8; border-radius: 7px; font-size: 32px; color: #333; }

  .periods { display: grid; grid-template-columns: 160px 161px 163px 161px 162px 176px 1fr; height: 95px; padding-right: 17px; border-bottom: 2px solid #ddd; box-sizing: border-box; font-size: 39px; color: #666; }
  .periods svg { margin-left: 8px; }
  .periods button:last-child svg { margin-left: 0; }
  .active { color: #e0560c; display: grid; grid-template-rows: 1fr 6px; justify-items: center; }
  .active::after { content: ''; width: 55px; height: 6px; border-radius: 3px; background: #e5580e; }
  .periods .active { padding: 6px 0 5px; }

  .averages { display: flex; align-items: center; height: 57px; padding: 0 16px 0 16px; }
  .averages .legend { margin: 0 -300px 0 -103px; }
  .pick { flex: none; gap: 13px; height: 42px; border: 2px solid #e1e4e9; border-radius: 7px; box-sizing: border-box; background: #f6f7fa; color: #222; font-size: 32.500px; }
  .tight { width: 99px; gap: 4px; }
  .dk { width: 115px; gap: 7px; margin-left: auto; }
  .dk svg { align-self: flex-end; margin-bottom: 6px; }
  .rights { width: 121px; height: 42px; margin-left: 41px; border-radius: 7px; background: #eb5609; color: #fff; font-size: 32.500px; }

  .board { display: flex; gap: 16px; padding-left: 12px; }
  .charts { width: 711px; }
  .kline { position: relative; z-index: 1; }
  .row { display: flex; align-items: center; height: 58px; padding-left: 5px; }
  .row .legend { margin-left: -105px; }
  .row .w137 + .legend { margin-left: -142px; }
  .w100 { width: 100px; }
  .w171 { width: 171px; }
  .w137 { width: 137px; }
  .next { flex: none; width: 40px; height: 56px; margin-left: -40px; border-radius: 11px 0 0 11px; background: #999; }
  .unlock { margin-left: 5px; margin-top: -2px; font-size: 34.900px; color: #dc5a12; }
  .axis { background: #f8f9fb; }
  .slider { display: flex; align-items: center; justify-content: space-between; height: 16px; margin-top: 13px; padding: 0 5px; border-radius: 8px; background: #f1f1f3; }
  .handle { display: flex; align-items: center; justify-content: center; gap: 5px; width: 43px; height: 27px; border-radius: 6px; background: #fff; box-shadow: 0 0 5px rgba(0, 0, 0, 0.18); }
  .handle i { width: 2px; height: 16px; background: #777; }

  .chips { width: 313px; }
  .keys { display: flex; justify-content: space-between; align-items: center; height: 60px; padding-left: 1px; font-size: 26.500px; color: #666; }
  .keys span { display: flex; align-items: center; gap: 10px; }
  .keys i { width: 14px; height: 14px; }
  .trapped { background: #5bb948; }
  .profit { background: #e84c4c; }
  .mean { background: #2f80e0; }
  .stat { display: flex; align-items: center; justify-content: space-between; height: 44.500px; padding-left: 2px; font-size: 26.500px; color: #666; }
  .stat span { display: flex; align-items: center; gap: 11px; }
  .stat b { margin-right: -1px; font-weight: 500; font-size: 27px; color: #333; }
  .stat .narrow { letter-spacing: -1.500px; }
  .stat .date { letter-spacing: -1px; }
  .keys + .stat { margin-top: -6px; }
  .switch { display: flex; height: 66px; margin: 8px 0 8px 2px; padding: 6px 5px; border-radius: 6px; box-sizing: border-box; background: #f7f8fa; font-size: 29.500px; color: #666; }
  .switch button { flex: 1; border-radius: 6px; }
  .switch .on { background: #fff; color: #333; font-weight: 700; }

  .promo { display: flex; align-items: center; height: 83px; margin: 30px 17px 0; padding: 0 34px 0 28px; border-radius: 42px; box-sizing: border-box; background: #fcede4; color: #d9570f; font-size: 36px; }
  .promo span { margin-left: 49px; margin-top: -3px; }
  .promo .close { margin-left: auto; }

  .sections { display: grid; grid-template-columns: repeat(7, 1fr); height: 90px; margin-top: 15px; padding: 0 31px; border-top: 2px solid #ddd; box-sizing: border-box; font-size: 39px; color: #666; }
  .sections .active { padding-top: 5px; }

  .bottom { display: grid; grid-template-columns: 251px 207px 207px 207px 208px; height: 164px; border-top: 2px solid #ddd; background: #f7f8fb; color: #666; }
  .index strong { display: block; margin: 9px 0 0 60px; font-size: 37.500px; font-weight: 400; letter-spacing: -0.500px; color: #0f960f; }
  .index svg { margin: 7px 0 0 117px; }
  .index p { display: flex; justify-content: space-between; margin-left: 38px; margin-top: 10px; font-size: 31.500px; }
  .index em { color: #0f960f; font-size: 34px; }
  .item { display: flex; flex-direction: column; align-items: center; padding-top: 7px; font-size: 31.500px; }
  .item span { margin-top: 17px; }
</style>
